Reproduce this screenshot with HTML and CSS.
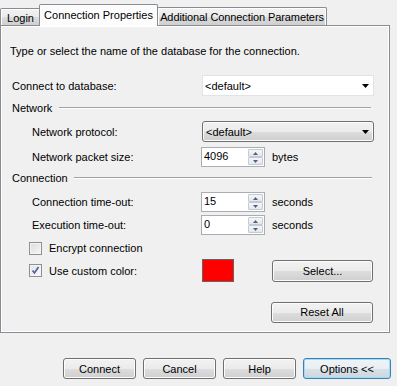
FILE: index.html
```html
<!DOCTYPE html>
<html>
<head>
<meta charset="utf-8">
<link rel="stylesheet" href="styles.css">
</head>
<body>
<div class="dialog">
  <div class="tabs">
    <div class="tab tab-login">Login</div>
    <div class="tab tab-active">Connection Properties</div>
    <div class="tab tab-extra">Additional Connection Parameters</div>
  </div>
  <div class="panel">
    <div class="intro">Type or select the name of the database for the connection.</div>

    <div class="row row-db">
      <span class="label">Connect to database:</span>
      <div class="combo combo-edit">
        <span class="combo-text">&lt;default&gt;</span>
        <svg class="arrow" width="7" height="4" viewBox="0 0 7 4"><path d="M0 0H7L3.5 4Z" fill="#000"/></svg>
      </div>
    </div>

    <div class="section sec-network"><span>Network</span><span class="rule"></span></div>

    <div class="row row-proto">
      <span class="label indent">Network protocol:</span>
      <div class="combo combo-list">
        <span class="combo-text">&lt;default&gt;</span>
        <svg class="arrow" width="7" height="4" viewBox="0 0 7 4"><path d="M0 0H7L3.5 4Z" fill="#000"/></svg>
      </div>
    </div>

    <div class="row row-packet">
      <span class="label indent">Network packet size:</span>
      <div class="spin">
        <span class="spin-text">4096</span>
        <div class="spin-btns">
          <span class="spin-btn"><svg width="5" height="3" viewBox="0 0 5 3"><path d="M2.5 0L5 3H0Z" fill="#4d6185"/></svg></span>
          <span class="spin-btn"><svg width="5" height="3" viewBox="0 0 5 3"><path d="M0 0H5L2.5 3Z" fill="#4d6185"/></svg></span>
        </div>
      </div>
      <span class="unit">bytes</span>
    </div>

    <div class="section sec-conn"><span>Connection</span><span class="rule"></span></div>

    <div class="row row-ctimeout">
      <span class="label indent">Connection time-out:</span>
      <div class="spin">
        <span class="spin-text">15</span>
        <div class="spin-btns">
          <span class="spin-btn"><svg width="5" height="3" viewBox="0 0 5 3"><path d="M2.5 0L5 3H0Z" fill="#4d6185"/></svg></span>
          <span class="spin-btn"><svg width="5" height="3" viewBox="0 0 5 3"><path d="M0 0H5L2.5 3Z" fill="#4d6185"/></svg></span>
        </div>
      </div>
      <span class="unit">seconds</span>
    </div>

    <div class="row row-etimeout">
      <span class="label indent">Execution time-out:</span>
      <div class="spin">
        <span class="spin-text">0</span>
        <div class="spin-btns">
          <span class="spin-btn"><svg width="5" height="3" viewBox="0 0 5 3"><path d="M2.5 0L5 3H0Z" fill="#4d6185"/></svg></span>
          <span class="spin-btn"><svg width="5" height="3" viewBox="0 0 5 3"><path d="M0 0H5L2.5 3Z" fill="#4d6185"/></svg></span>
        </div>
      </div>
      <span class="unit">seconds</span>
    </div>

    <div class="row row-encrypt">
      <span class="check"></span>
      <span class="check-label">Encrypt connection</span>
    </div>

    <div class="row row-custom">
      <div class="check-group">
        <span class="check checked"><svg width="9" height="9" viewBox="0 0 9 9"><path d="M1.5 4.5L3.5 7L7.5 1" fill="none" stroke="#4a5f97" stroke-width="1.6"/></svg></span>
        <span class="check-label">Use custom color:</span>
      </div>
      <span class="swatch"></span>
      <button class="btn btn-select">Select...</button>
    </div>

    <div class="row row-reset">
      <button class="btn btn-reset">Reset All</button>
    </div>
  </div>

  <div class="footer">
    <button class="btn btn-foot">Connect</button>
    <button class="btn btn-foot">Cancel</button>
    <button class="btn btn-foot">Help</button>
    <button class="btn btn-foot btn-default">Options &lt;&lt;</button>
  </div>
</div>
</body>
</html>
```

FILE: styles.css
```css
* { box-sizing: border-box; }

html, body {
  margin: 0;
  padding: 0;
  background: #f0f0f0;
}

body {
  font-family: "Liberation Sans", Arial, sans-serif;
  font-size: 11px;
  color: #000;
  width: 397px;
  height: 386px;
  overflow: hidden;
}

.dialog {
  width: 397px;
  height: 386px;
}

/* ---- tabs ---- */
.tabs {
  display: flex;
  align-items: flex-end;
  height: 25px;
}

.tab {
  display: flex;
  align-items: center;
  justify-content: center;
  border: 1px solid #898c95;
  border-bottom: none;
  border-radius: 2px 2px 0 0;
  background: linear-gradient(#f2f2f2, #ebebeb 50%, #dcdcdc 51%, #cfcfcf);
  box-shadow: inset 1px 1px 0 #fff, inset -1px 0 0 #fff;
  height: 17px;
  padding-top: 1px;
  white-space: nowrap;
}

.tab-login {
  width: 41px;
}

.tab-active {
  position: relative;
  z-index: 2;
  width: 119px;
  height: 22px;
  margin-left: -2px;
  margin-bottom: -1px;
  padding-bottom: 3px;
  background: #fcfcfc;
  box-shadow: none;
}

.tab-extra {
  width: 170px;
  margin-left: -1px;
  height: 18px;
  letter-spacing: -0.1px;
}

/* ---- panel ---- */
.panel {
  position: relative;
  width: 390px;
  height: 308px;
  border: 1px solid #898c95;
  box-shadow: inset 1px 1px 0 #fff, inset -1px -1px 0 #fff;
  background: #f0f0f0;
  display: flex;
  flex-direction: column;
}

.intro {
  margin-top: 18px;
  padding-left: 9px;
  height: 14px;
  line-height: 14px;
}

.row {
  display: flex;
  align-items: center;
  padding-left: 11px;
}

.label {
  width: 189px;
  flex: none;
}

.label.indent {
  padding-left: 20px;
}

.row-db { margin-top: 17px; height: 21px; }
.row-proto { margin-top: 7px; height: 21px; }
.row-packet { margin-top: 5px; height: 20px; }
.row-ctimeout { margin-top: 8px; height: 20px; }
.row-etimeout { margin-top: 3px; height: 20px; }
.row-encrypt { margin-top: 6px; height: 14px; padding-left: 28px; }
.row-custom { margin-top: 4px; height: 23px; }
.row-reset { margin-top: 19px; height: 22px; padding-left: 270px; }

/* section headers */
.section {
  display: flex;
  align-items: center;
  padding-left: 11px;
  height: 13px;
}

.sec-network { margin-top: 5px; }
.sec-conn { margin-top: 4px; }

.section .rule {
  height: 2px;
  border-top: 1px solid #a0a0a0;
  border-bottom: 1px solid #fff;
  margin-left: 6px;
}

.sec-network .rule { width: 312px; margin-left: 7px; }
.sec-conn .rule { width: 298px; margin-left: 6px; }

/* combos */
.combo {
  display: flex;
  align-items: center;
  justify-content: space-between;
  width: 172px;
  height: 21px;
  margin-left: 1px;
  padding: 0 4px 0 2px;
}

.combo-edit {
  background: #fff;
  border: 1px solid #e2e3ea;
}

.combo-list {
  border: 1px solid #707070;
  border-radius: 3px;
  background: linear-gradient(#f2f2f2, #ebebeb 50%, #dddddd 51%, #cfcfcf);
  box-shadow: inset 0 0 0 1px #fcfcfc;
  padding-left: 3px;
}

.arrow { display: block; }

/* spin boxes */
.spin {
  display: flex;
  align-items: stretch;
  justify-content: space-between;
  width: 64px;
  height: 20px;
  background: #fff;
  border: 1px solid #abadb3;
}

.spin-text {
  padding-left: 2px;
  line-height: 17px;
}

.spin-btns {
  display: flex;
  flex-direction: column;
  width: 16px;
  padding: 1px 1px 1px 0;
}

.spin-btn {
  flex: 1;
  display: flex;
  align-items: center;
  justify-content: center;
  border: 1px solid #c5c9d2;
  border-radius: 1px;
  background: linear-gradient(#f5f6f8, #e4e7ec);
}

.spin-btn svg { display: block; }

.unit {
  margin-left: 7px;
}

/* checkboxes */
.check-group {
  display: flex;
  align-items: center;
  width: 189px;
  padding-left: 17px;
  flex: none;
}

.check {
  display: flex;
  align-items: center;
  justify-content: center;
  width: 13px;
  height: 13px;
  border: 1px solid #8e8f8f;
  background: linear-gradient(135deg, #dcdcdc, #f6f6f6);
  box-shadow: inset 0 0 0 1px #f4f4f4;
  flex: none;
}

.check.checked {
  background: linear-gradient(135deg, #e4e4e4, #fafafa);
}

.check svg { display: block; }

.check-label {
  margin-left: 7px;
}

.swatch {
  width: 32px;
  height: 23px;
  margin-left: 1px;
  background: #ff0000;
  border: 1px solid #646464;
}

/* buttons */
.btn {
  font-family: "Liberation Sans", Arial, sans-serif;
  font-size: 11px;
  color: #000;
  height: 22px;
  padding: 0;
  border: 1px solid #707070;
  border-radius: 3px;
  background: linear-gradient(#f2f2f2, #ebebeb 50%, #dddddd 51%, #cfcfcf);
  box-shadow: inset 0 0 0 1px #fcfcfc;
}

.btn-select {
  width: 101px;
  margin-left: 38px;
}

.btn-reset {
  width: 102px;
  height: 21px;
}

.footer {
  display: flex;
  justify-content: flex-end;
  gap: 7px;
  padding-right: 6px;
  margin-top: 25px;
}

.btn-foot {
  width: 73px;
  height: 21px;
}

.btn-default {
  width: 88px;
  border-color: #3c7fb1;
  box-shadow: inset 0 0 0 1px #9fdcf7;
  background: linear-gradient(#f0f4f7, #e8eef2 50%, #d9e2e8 51%, #ccd6dd);
}
```
